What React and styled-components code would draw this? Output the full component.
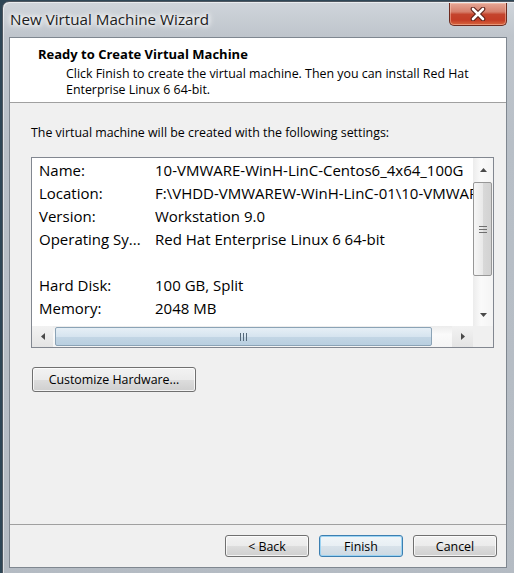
import React from 'react';
import styled, { createGlobalStyle } from 'styled-components';

const Global = createGlobalStyle`
  html, body { margin: 0; padding: 0; }
  body {
    width: 514px; height: 573px; overflow: hidden;
    background: #2e4656;
    font-family: "Open Sans", "Noto Sans", sans-serif;
    color: #000;
  }
`;

const Desktop = styled.div`
  width: 514px;
  height: 573px;
  overflow: hidden;
  padding: 1px 0 0 2px;
  box-sizing: border-box;
`;

const Window = styled.div`
  width: 530px;
  height: 590px;
  box-sizing: border-box;
  border: 1px solid #4f5760;
  border-radius: 7px 7px 0 0;
  background: linear-gradient(to bottom, #d0d5db 0px, #bfc5cc 34px, #b8bfc7 140px, #b4bbc3 100%);
  box-shadow: inset 1px 1px 0 rgba(255, 255, 255, 0.55);
  padding-left: 6px;
  display: flex;
  flex-direction: column;
`;

const TitleBar = styled.div`
  width: 498px;
  height: 35px;
  display: flex;
  justify-content: space-between;
  align-items: flex-start;
  flex-shrink: 0;
`;

const Title = styled.div`
  padding: 7px 0 0 1px;
  font-size: 15.2px;
  line-height: 20px;
  color: #1c1c1c;
  text-shadow: 0 0 8px #fff, 0 0 6px #fff, 0 0 4px #fff;
`;

const CloseButton = styled.div`
  margin-top: 1px;
  width: 58px;
  height: 23px;
  box-sizing: border-box;
  border: 1px solid #6e2a1e;
  border-top: none;
  border-radius: 0 0 5px 5px;
  background: linear-gradient(to bottom, #e6a796 0%, #d6806c 40%, #c4442d 52%, #c43d26 78%, #d9673f 100%);
  box-shadow: inset 0 0 0 1px rgba(255, 210, 190, 0.45);
  display: flex;
  align-items: center;
  justify-content: center;
`;

const Client = styled.div`
  width: 498px;
  height: 531px;
  box-sizing: border-box;
  border: 1px solid #7f8790;
  background: #f0f0f0;
  display: flex;
  flex-direction: column;
  flex-shrink: 0;
`;

const Header = styled.div`
  height: 65px;
  box-sizing: border-box;
  background: #fff;
  border-bottom: 1px solid #a0a0a0;
  padding: 8px 20px 0 28px;
`;

const HeaderTitle = styled.div`
  font-weight: 700;
  font-size: 13px;
  line-height: 16px;
`;

const HeaderDesc = styled.div`
  margin: 4px 0 0 28px;
  font-size: 12.4px;
  line-height: 16px;
`;

const Body = styled.div`
  flex: 1;
  padding: 22px 12px 0 21px;
  display: flex;
  flex-direction: column;
  align-items: flex-start;
`;

const Intro = styled.div`
  font-size: 12.4px;
  line-height: 16px;
`;

const ListBox = styled.div`
  margin-top: 16px;
  width: 463px;
  height: 191px;
  box-sizing: border-box;
  border: 1px solid #828790;
  background: #fff;
  display: grid;
  grid-template-columns: 1fr 20px;
  grid-template-rows: 1fr 21px;
`;

const ListContent = styled.div`
  overflow: hidden;
  padding: 1px 0 0 7px;
  white-space: nowrap;
`;

const Row = styled.div`
  display: grid;
  grid-template-columns: 116px max-content;
  height: 23px;
  line-height: 23px;
  font-size: 15px;
`;

const VScroll = styled.div`
  display: flex;
  flex-direction: column;
  background: linear-gradient(to right, #ececec, #fafafa 40%, #f4f4f4);
`;

const HScroll = styled.div`
  display: flex;
  align-items: stretch;
  background: linear-gradient(to bottom, #ececec, #fafafa 40%, #f4f4f4);
`;

const ArrowBtn = styled.div`
  flex: 0 0 ${(p) => p.size}px;
  display: flex;
  align-items: center;
  justify-content: center;
  background: ${(p) => (p.shaded ? 'linear-gradient(to bottom, #f2f2f2, #e4e4e4)' : 'transparent')};
`;

const Spacer = styled.div`
  flex: 1;
`;

const VThumb = styled.div`
  margin-top: 1px;
  width: 19px;
  height: 94px;
  box-sizing: border-box;
  border: 1px solid #979797;
  border-radius: 2px;
  background: linear-gradient(to right, #f6f6f6, #e9e9e9 50%, #d9d9d9 51%, #d2d2d2);
  display: flex;
  align-items: center;
  justify-content: center;
`;

const HThumb = styled.div`
  margin: 1px 0 1px 2px;
  width: 377px;
  box-sizing: border-box;
  border: 1px solid #8ba3b6;
  border-radius: 2px;
  background: linear-gradient(to bottom, #e6eff6, #d6e4ef 50%, #c3d6e5 51%, #b9cfe0);
  display: flex;
  align-items: center;
  justify-content: center;
`;

const Corner = styled.div`
  background: #f0f0f0;
`;

const Button = styled.button`
  height: ${(p) => p.h || 22}px;
  width: ${(p) => p.w || 84}px;
  box-sizing: border-box;
  border: 1px solid ${(p) => (p.primary ? '#3c7fb1' : '#707070')};
  border-radius: 3px;
  background: ${(p) =>
    p.primary
      ? 'linear-gradient(to bottom, #f0f5f8 0%, #e8eff4 50%, #d8e2ea 51%, #cdd9e2 100%)'
      : 'linear-gradient(to bottom, #f2f2f2 0%, #ebebeb 50%, #dddddd 51%, #cfcfcf 100%)'};
  box-shadow: inset 0 0 0 1px ${(p) => (p.primary ? '#9cd3f2' : 'rgba(255,255,255,0.75)')};
  font-family: "Open Sans", "Noto Sans", sans-serif;
  font-size: 12.4px;
  color: #000;
  padding: 0;
  display: flex;
  align-items: center;
  justify-content: center;
`;

const CustomizeButton = styled(Button)`
  margin: 19px 0 0 1px;
`;

const Footer = styled.div`
  border-top: 1px solid #a0a0a0;
  padding: 10px 9px 10px 0;
  display: flex;
  justify-content: flex-end;
  gap: 10px;
`;

const Tri = ({ dir }) => {
  const pts = {
    up: '0,4 7,4 3.5,0',
    down: '0,0 7,0 3.5,4',
    left: '4,0 4,7 0,3.5',
    right: '0,0 0,7 4,3.5',
  }[dir];
  const vertical = dir === 'up' || dir === 'down';
  return (
    <svg width={vertical ? 7 : 4} height={vertical ? 4 : 7} viewBox={vertical ? '0 0 7 4' : '0 0 4 7'}>
      <polygon points={pts} fill="#4a4a4a" />
    </svg>
  );
};

const rows = [
  ['Name:', '10-VMWARE-WinH-LinC-Centos6_4x64_100G'],
  ['Location:', 'F:\\VHDD-VMWAREW-WinH-LinC-01\\10-VMWARE-WinH-LinC-Centos6_4x64_100G'],
  ['Version:', 'Workstation 9.0'],
  ['Operating Sy...', 'Red Hat Enterprise Linux 6 64-bit'],
  ['', ''],
  ['Hard Disk:', '100 GB, Split'],
  ['Memory:', '2048 MB'],
  ['Network Ad...', 'NAT'],
];

export default function App() {
  return (
    <>
      <Global />
      <Desktop>
        <Window>
          <TitleBar>
            <Title>New Virtual Machine Wizard</Title>
            <CloseButton>
              <svg width="18" height="14" viewBox="0 0 18 14">
                <path d="M4 2 L14 12 M14 2 L4 12" stroke="#5a2018" strokeWidth="4.6" strokeLinecap="round" />
                <path d="M4 2 L14 12 M14 2 L4 12" stroke="#ffffff" strokeWidth="2.6" strokeLinecap="round" />
              </svg>
            </CloseButton>
          </TitleBar>
          <Client>
            <Header>
              <HeaderTitle>Ready to Create Virtual Machine</HeaderTitle>
              <HeaderDesc>
                Click Finish to create the virtual machine. Then you can install Red Hat Enterprise Linux 6 64-bit.
              </HeaderDesc>
            </Header>
            <Body>
              <Intro>The virtual machine will be created with the following settings:</Intro>
              <ListBox>
                <ListContent>
                  {rows.map(([k, v], i) => (
                    <Row key={i}>
                      <span>{k}</span>
                      <span>{v}</span>
                    </Row>
                  ))}
                </ListContent>
                <VScroll>
                  <ArrowBtn size={23}>
                    <Tri dir="up" />
                  </ArrowBtn>
                  <VThumb>
                    <svg width="8" height="7" viewBox="0 0 8 7">
                      <path d="M0 0.5 H8 M0 3.5 H8 M0 6.5 H8" stroke="#6f6f6f" strokeWidth="1" />
                    </svg>
                  </VThumb>
                  <Spacer />
                  <ArrowBtn size={23}>
                    <Tri dir="down" />
                  </ArrowBtn>
                </VScroll>
                <HScroll>
                  <ArrowBtn size={21} shaded>
                    <Tri dir="left" />
                  </ArrowBtn>
                  <HThumb>
                    <svg width="7" height="8" viewBox="0 0 7 8">
                      <path d="M0.5 0 V8 M3.5 0 V8 M6.5 0 V8" stroke="#55697a" strokeWidth="1" />
                    </svg>
                  </HThumb>
                  <Spacer />
                  <ArrowBtn size={21} shaded>
                    <Tri dir="right" />
                  </ArrowBtn>
                </HScroll>
                <Corner />
              </ListBox>
              <CustomizeButton w={164} h={25}>Customize Hardware...</CustomizeButton>
            </Body>
            <Footer>
              <Button>&lt; Back</Button>
              <Button primary>Finish</Button>
              <Button>Cancel</Button>
            </Footer>
          </Client>
        </Window>
      </Desktop>
    </>
  );
}
